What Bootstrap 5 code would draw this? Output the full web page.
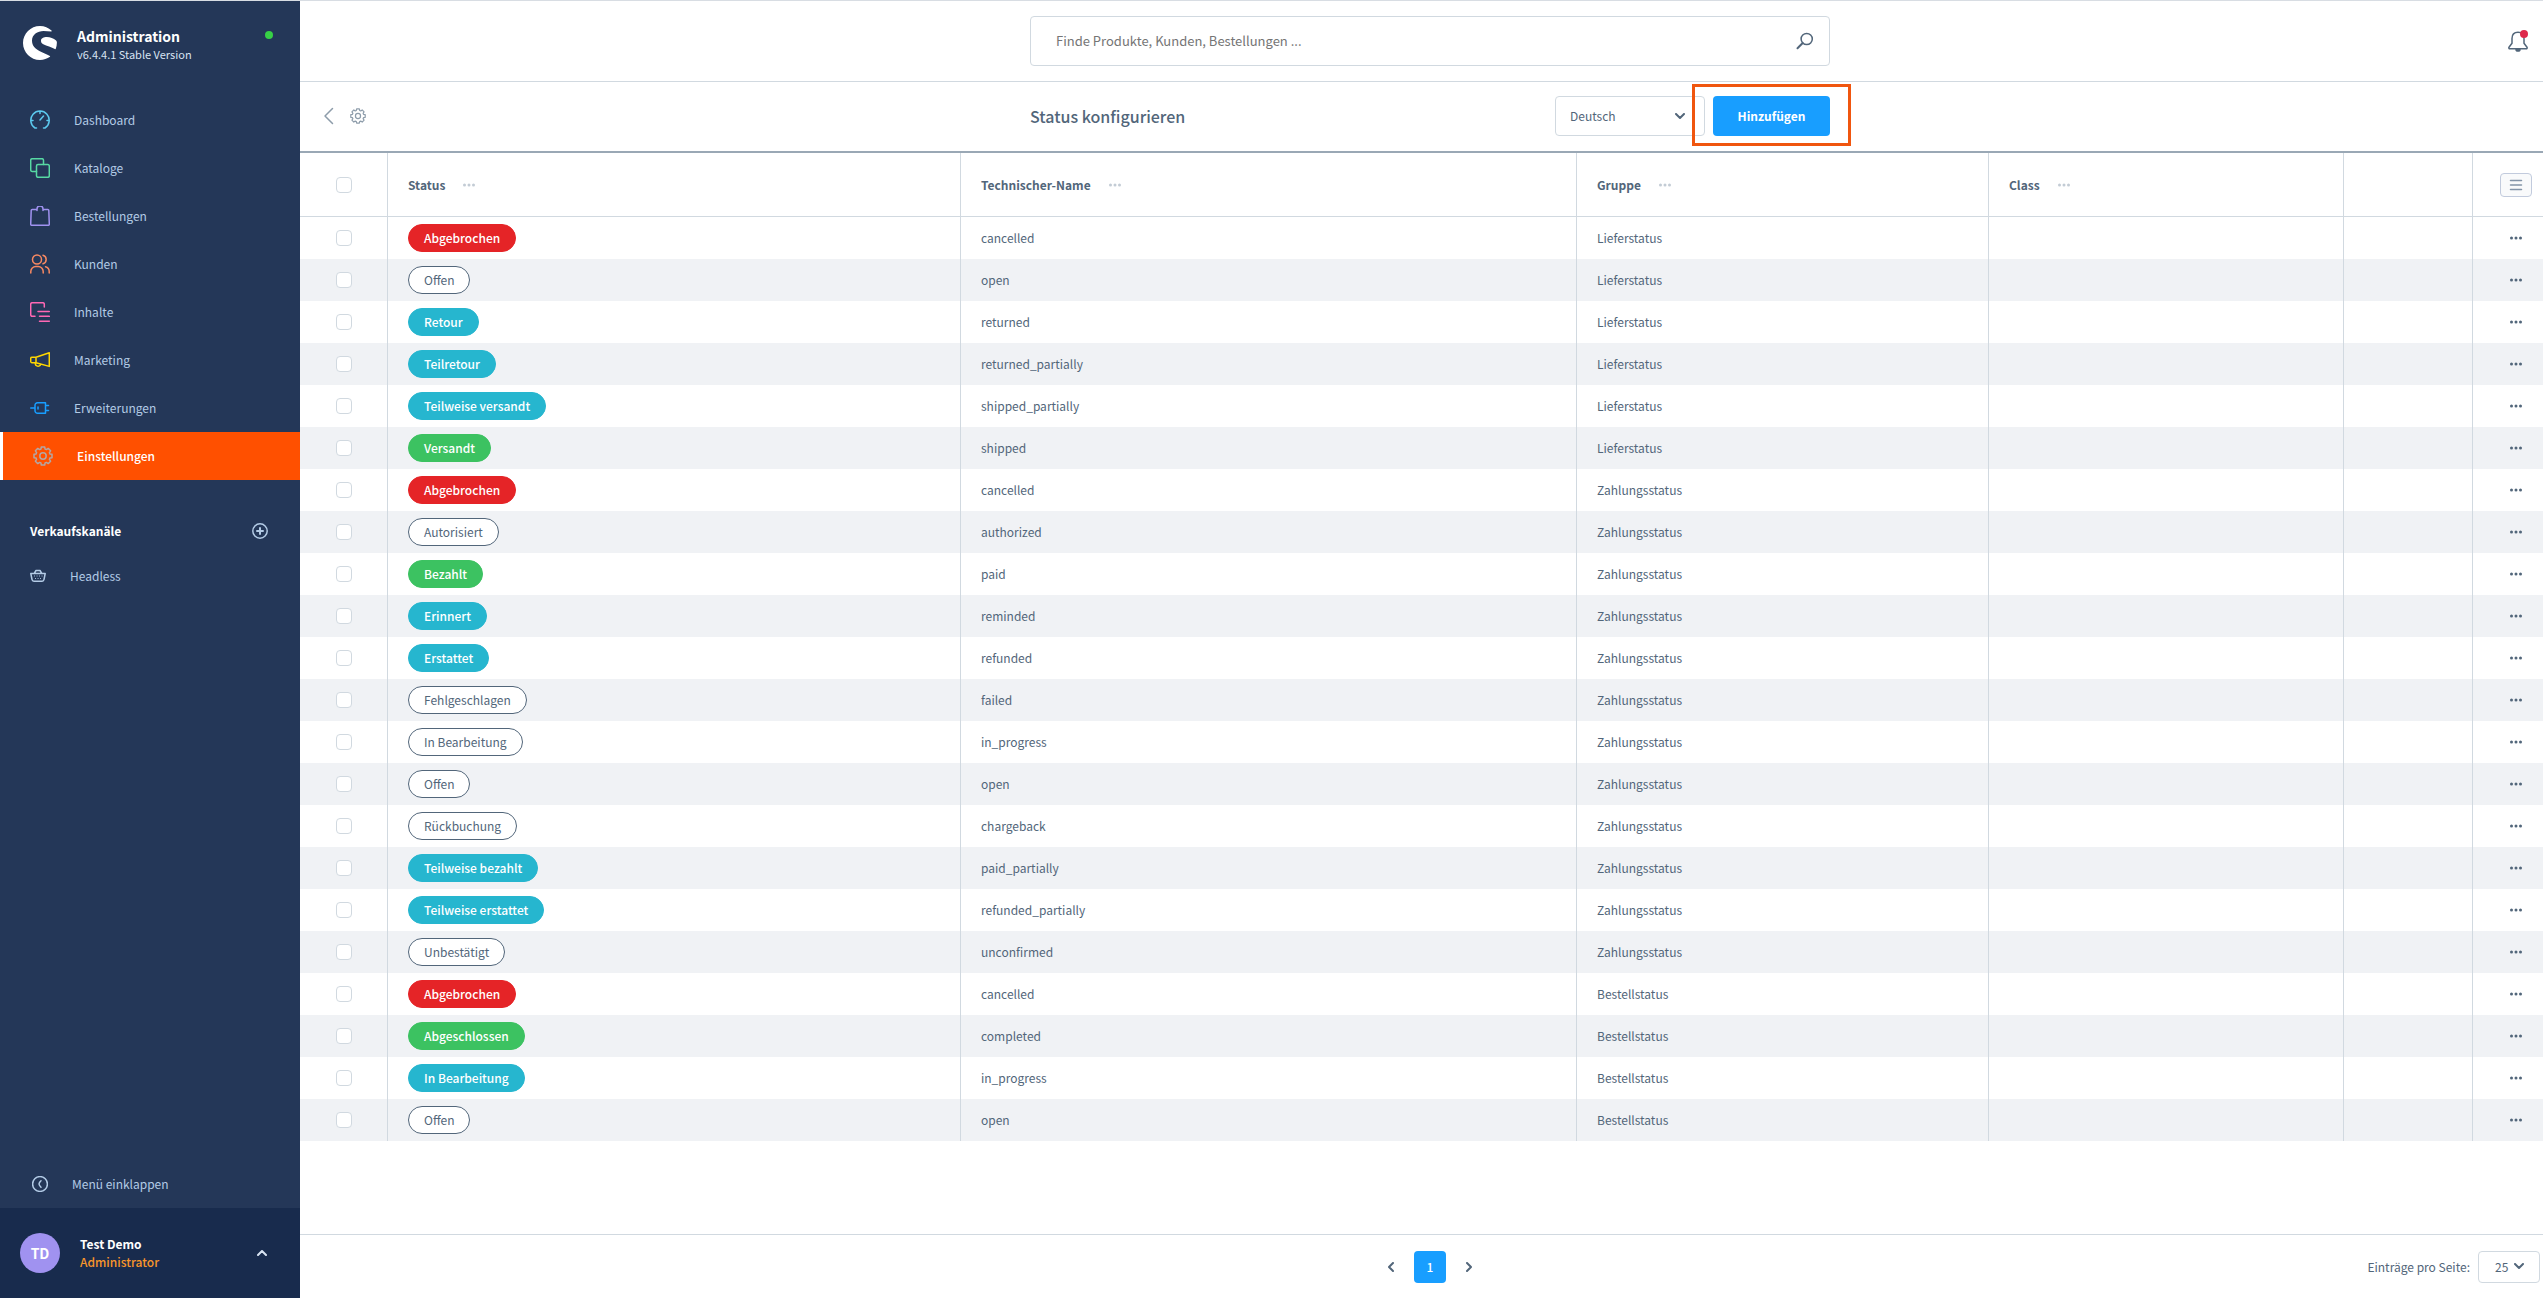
<!DOCTYPE html>
<html lang="de">
<head>
<meta charset="utf-8">
<meta name="viewport" content="width=device-width, initial-scale=1">
<title>Status konfigurieren | Administration</title>
<link href="https://cdn.jsdelivr.net/npm/bootstrap@5.3.0/dist/css/bootstrap.min.css" rel="stylesheet">
<style>
:root{--ink:#52667a;--line:#d1d9e0;--side:#243758;--side-text:#b3cbe6;--blue:#189eff}
body{font-family:"Noto Sans CJK SC","Noto Sans",sans-serif;font-size:12px;line-height:18px;color:var(--ink);background:#fff;min-height:100vh}
svg{display:block;fill:none;stroke:currentColor;stroke-width:1.5;stroke-linecap:round;stroke-linejoin:round;flex:none}
.app-frame{min-height:100vh;border-top:1px solid #d8dde3}
.side{width:300px;background:var(--side);color:var(--side-text)}
.side-head{height:95px;padding:21px 27px 0 23px;gap:20px;color:#fff}
.side-names{margin-top:5px}
.side-title{font-size:14px;font-weight:700}
.side-version{font-size:11px;line-height:18px;color:#d8e3f2}
.online-dot{width:8px;height:8px;border-radius:50%;background:#37d046;margin-top:9px}
.side-link{height:48px;padding:0 30px;gap:24px;color:var(--side-text);text-decoration:none}
.side-link.active{background:#ff5000;color:#fff;border-left:3px solid #fff;font-weight:500}
.side-link.active svg{color:#b3a7a5}
.side-section{margin-top:27px;height:48px;padding:0 32px 0 30px;color:#fff;font-weight:700}
.side-link.sub{height:42px;gap:24px}
.side-link.fold{padding-left:32px;gap:24px;width:100%;border:0;background:none}
.side-user{height:90px;background:#182b4d;padding:0 33px 0 20px;gap:20px;color:#fff;border:0;width:100%}
.user-role{color:#f8962b;font-weight:500}
.avatar{width:40px;height:40px;border-radius:50%;background:#a092f0;font-size:14px;font-weight:700}
.plain{border:0;background:none;padding:0;color:inherit}
.three{display:grid;grid-template-columns:minmax(0,1fr) minmax(0,800px) minmax(0,1fr);align-items:center;padding-left:17px}
.topbar{height:81px;border-bottom:1px solid var(--line)}
.search-box{border:1px solid var(--line);border-radius:4px;height:50px;padding:0 15px 0 25px}
.search-box input{border:0;outline:0;font-size:13px;color:var(--ink);background:none}
.search-box input::placeholder{color:#757575;opacity:1}
.bell{margin-right:15px;position:relative}
.bell i{position:absolute;top:0;right:0;width:8px;height:8px;border-radius:50%;background:#de294c}
.toolbar{height:71px;padding-bottom:1px;border-bottom:2px solid #9aa8b5}
.tools{padding-left:5px;gap:16px;color:#8d9caa}
.page-title{font-size:16px;font-weight:500;line-height:24px;margin:0}
.picker{appearance:none;border:1px solid var(--line);border-radius:4px;color:var(--ink);background:#fff url("data:image/svg+xml,%3Csvg xmlns='http://www.w3.org/2000/svg' width='10' height='7' fill='none' stroke='%2352667a' stroke-width='2' stroke-linecap='round' stroke-linejoin='round'%3E%3Cpath d='M1 1l4 4 4-4'/%3E%3C/svg%3E") no-repeat}
.picker.lang{width:150px;height:40px;padding:0 14px;background-position:right 19px center}
.picker.count{width:62px;height:32px;padding:0 16px;background-position:right 15px center;margin-right:3px}
.add-btn{height:40px;width:117px;border:0;border-radius:4px;background:var(--blue);color:#fff;font-weight:700}
.callout-frame{position:absolute;inset:-12px -21px -10px -21px;border:3px solid #f0560f;pointer-events:none}
.states{table-layout:fixed;width:100%;border-collapse:separate;border-spacing:0}
.states th,.states td{padding:0 0 0 20px;border-right:1px solid var(--line);vertical-align:middle;overflow:hidden;white-space:nowrap}
.states th:last-child,.states td:last-child{border-right:0;padding:0 11px 0 0}
.states th:last-child>*,.states td:last-child>*{margin-left:auto}
.states th:first-child,.states td:first-child{padding:0}
.states th{height:64px;border-bottom:1px solid var(--line);font-weight:700}
.states td{height:42px}
.states tbody tr:nth-child(even) td{background:#f0f2f5}
.states input{appearance:none;display:block;width:16px;height:16px;border:1px solid var(--line);border-radius:4px;background:#fff;margin:0 auto}
.states svg{stroke:none;fill:currentColor}
.states td:last-child{padding-right:21px}
.head-cell{gap:18px}
th .plain{color:#c3ccd5}
.list-btn{width:32px;height:24px;border:1px solid #c2cbdd;border-radius:4px;background:#f9fafb;color:#8394a8;padding:0}
.states .list-btn svg{stroke:currentColor}
.pill{display:inline-block;height:28px;line-height:26px;padding:0 15px;border:1px solid var(--ink);border-radius:14px;background:#fff;vertical-align:middle}
.pill.red,.pill.teal,.pill.green{color:#fff;font-weight:500}
.pill.red{background:#e52427;border-color:#e52427}
.pill.teal{background:#26b6cf;border-color:#26b6cf}
.pill.green{background:#3cc261;border-color:#3cc261}
.pager{height:64px;border-top:1px solid var(--line)}
.pager .current{width:32px;height:32px;border:0;border-radius:4px;background:var(--blue);color:#fff;font-weight:500}
</style>
<script src="https://cdn.jsdelivr.net/npm/bootstrap@5.3.0/dist/js/bootstrap.bundle.min.js"></script>
</head>
<body>
<svg class="d-none" aria-hidden="true">
 <symbol id="dots" viewBox="0 0 12 4"><circle cx="1.5" cy="2" r="1.5"/><circle cx="6" cy="2" r="1.5"/><circle cx="10.5" cy="2" r="1.5"/></symbol>
 <symbol id="gear" viewBox="0 0 20 20"><path d="M8.300 1h3.400l.4 2.100 1.300.5 1.800-1.200 2.400 2.400-1.200 1.800.5 1.300 2.100.4v3.400l-2.100.4-.5 1.300 1.200 1.800-2.400 2.400-1.800-1.200-1.300.5-.4 2.100H8.300l-.4-2.100-1.300-.5-1.800 1.200-2.400-2.400 1.200-1.800-.5-1.300L1 11.700V8.300l2.100-.4.5-1.300-1.200-1.800 2.400-2.400 1.800 1.200 1.300-.5z"/><circle cx="10" cy="10" r="3.200"/></symbol>
</svg>
<div class="app-frame d-flex">
 <aside class="side d-flex flex-column flex-shrink-0">
  <header class="side-head d-flex align-items-start">
   <svg class="mt-1" width="34" height="34" viewBox="0 0 34 34" style="stroke:none;fill:#fff"><path d="M28.500 4.500C25.500 1.800 21.500 0 17 0 7.600 0 0 7.600 0 17s7.600 17 17 17c3.700 0 7.200-1.200 10-3.200.3-.2.2-.6-.1-.8-3-1.700-7.300-3.300-10.500-5C12 22.600 9 19.800 9 14.500 9 8.500 14.500 4.900 20.500 4.900c2.700 0 5.300.2 7.800.5.500 0 .6-.5.200-.9z"/><path d="M33.900 16.600c0 2.300-.4 4.300-1.100 6.200-.2.500-.6.600-1 .3C28.600 21 23.700 20.200 20.300 18.300 18.500 17.300 18 16 18 14.700c0-2.400 2.700-3.700 5.800-3.700 3.400 0 6.800 1.300 9.300 3.400.6.500.8 1.200.8 2.200z"/></svg>
   <div class="side-names flex-grow-1"><div class="side-title">Administration</div><div class="side-version">v6.4.4.1 Stable Version</div></div>
   <span class="online-dot"></span>
  </header>
  <nav class="d-flex flex-column">
   <a class="side-link d-flex align-items-center" href="#"><svg style="color:#5cc9ee" width="20" height="20" viewBox="0 0 20 20"><path d="M6.500 18H5a9.200 9.200 0 1 1 10 0h-1.500M10 1v2.500M1 10.500h2M17 10.500h2M10 10l3.500-4"/></svg>Dashboard</a>
   <a class="side-link d-flex align-items-center" href="#"><svg style="color:#57d9a3" width="20" height="20" viewBox="0 0 20 20"><rect x="6.500" y="6.500" width="12.800" height="12.800" rx="1.500"/><path d="M6.500 13.500H2.200A1.500 1.500 0 0 1 .7 12V2.200A1.500 1.500 0 0 1 2.200.7H12a1.500 1.500 0 0 1 1.500 1.500v4.300"/></svg>Kataloge</a>
   <a class="side-link d-flex align-items-center" href="#"><svg style="color:#a092f0" width="20" height="20" viewBox="0 0 20 20"><path d="M4.500 3.500H2.200a1 1 0 0 0-1 .9L.7 18.200a1 1 0 0 0 1 1.100h16.600a1 1 0 0 0 1-1.100L18.800 4.400a1 1 0 0 0-1-.9h-2.300M7 4.500V3a3 3 0 0 1 6 0v1.500M4.500 3.500H7M13 3.500h2.500"/></svg>Bestellungen</a>
   <a class="side-link d-flex align-items-center" href="#"><svg style="color:#f88962" width="20" height="20" viewBox="0 0 20 20"><circle cx="7" cy="5.500" r="4.500"/><path d="M.8 19v-1.500a5 5 0 0 1 5-5h2.400a5 5 0 0 1 5 5V19M13 1.200a4.500 4.500 0 0 1 0 8.600M15.500 12.700a5 5 0 0 1 3.700 4.800V19"/></svg>Kunden</a>
   <a class="side-link d-flex align-items-center" href="#"><svg style="color:#ff68b4" width="20" height="20" viewBox="0 0 20 20"><path d="M5 14.300H2.200a1.500 1.500 0 0 1-1.500-1.500V2.200A1.500 1.500 0 0 1 2.200.7h10.600a1.500 1.500 0 0 1 1.500 1.500V5M8 9.500h11.300M9.500 14.300h9.800M9.500 19.200h9.800"/></svg>Inhalte</a>
   <a class="side-link d-flex align-items-center" href="#"><svg style="color:#ffd700" width="20" height="20" viewBox="0 0 20 20"><path d="M6 7.300 19.300 2.800v13.600L6 12.700zM6 7.300H2A1.300 1.300 0 0 0 .7 8.600v2.800A1.300 1.300 0 0 0 2 12.700h4M5.500 12.800a2.700 2.700 0 0 0 5.200 1.500"/></svg>Marketing</a>
   <a class="side-link d-flex align-items-center" href="#"><svg style="color:#189eff" width="20" height="20" viewBox="0 0 20 20"><path d="M.7 10H5M7.500 4.700h8v10.600h-8A2.500 2.500 0 0 1 5 12.800V7.200a2.500 2.500 0 0 1 2.500-2.500zM15.500 7.500H18.500M15.500 12.500H18.500M8 9v2"/></svg>Erweiterungen</a>
   <a class="side-link active d-flex align-items-center" href="#"><svg width="20" height="20"><use href="#gear"/></svg>Einstellungen</a>
  </nav>
  <div class="side-section d-flex align-items-center justify-content-between">Verkaufskanäle
   <button class="plain" aria-label="Verkaufskanal hinzufügen" style="color:#b3cbe6"><svg width="16" height="16" viewBox="0 0 16 16"><circle cx="8" cy="8" r="7.200"/><path d="M8 5v6M5 8h6" stroke-width="2"/></svg></button></div>
  <a class="side-link sub d-flex align-items-center" href="#"><svg width="16" height="16" viewBox="0 0 16 16" stroke-width="1.200"><path d="M.8 5.500h14.400L14 11.500a2 2 0 0 1-2 1.700H4a2 2 0 0 1-2-1.700zM4.500 5 6 2.500h4L11.500 5"/><path d="M4.500 8h.1M7 8h.1M9.500 8h.1M12 8h.1M5.500 10.500h.1M8 10.500h.1M10.500 10.500h.1" stroke-width="1"/></svg>Headless</a>
  <div class="mt-auto">
   <button class="side-link fold d-flex align-items-center"><svg width="16" height="16" viewBox="0 0 16 16" stroke-width="1.200"><circle cx="8" cy="8" r="7.400"/><path d="M9 4.800Q7.200 6.500 7 8q.2 1.500 2 3.200"/></svg>Menü einklappen</button>
   <button class="side-user d-flex align-items-center text-start">
    <span class="avatar d-flex align-items-center justify-content-center">TD</span>
    <span class="flex-grow-1"><strong>Test Demo</strong><br><span class="user-role">Administrator</span></span>
    <svg width="10" height="6" viewBox="0 0 10 6" style="color:#d8e3f2;stroke-width:2"><path d="M1 5l4-4 4 4"/></svg>
   </button>
  </div>
 </aside>
 <main class="flex-grow-1 d-flex flex-column" style="min-width:0">
  <div class="topbar three">
   <span></span>
   <label class="search-box d-flex align-items-center"><input class="flex-grow-1 p-0" type="search" placeholder="Finde Produkte, Kunden, Bestellungen ..." aria-label="Suche">
    <svg width="18" height="18" viewBox="0 0 18 18"><circle cx="10.700" cy="7" r="5.600"/><path d="M6.700 11 1.500 16.200" stroke-width="2"/></svg></label>
   <button class="plain bell ms-auto" aria-label="Benachrichtigungen"><svg width="20" height="22" viewBox="0 0 20 22"><path d="M10 2.200c-3.800 0-6 2.600-6 6.300v4.800L1 17.200c-.4.800 0 1.600.9 1.600h16.200c.9 0 1.300-.8.9-1.600l-3-3.900V8.500c0-3.700-2.200-6.300-6-6.300z"/><path d="M8 19.500a2 1.600 0 0 0 4 0z" fill="currentColor"/></svg><i></i></button>
  </div>
  <div class="toolbar three">
   <div class="tools d-flex align-items-center"><a href="#" class="text-reset" aria-label="Zurück"><svg width="12" height="18" viewBox="0 0 12 18"><path d="M10.500 1.500 3 9l7.500 7.500"/></svg></a><button class="plain" aria-label="Einstellungen"><svg width="16" height="16"><use href="#gear"/></svg></button></div>
   <div class="d-flex align-items-center justify-content-between">
    <h1 class="page-title">Status konfigurieren</h1>
    <div class="d-flex gap-2"><select class="picker lang" aria-label="Sprache"><option>Deutsch</option></select>
     <div class="position-relative"><button class="add-btn">Hinzufügen</button><span class="callout-frame"></span></div></div>
   </div>
   <span></span>
  </div>
  <table class="states">
   <colgroup><col style="width:88px"><col style="width:573px"><col style="width:616px"><col style="width:412px"><col style="width:355px"><col style="width:129px"><col style="width:70px"></colgroup>
   <thead><tr><th><input type="checkbox" aria-label="Alle auswählen"></th>
    <th><div class="head-cell d-flex align-items-center">Status <button class="plain" aria-label="Spalte Status"><svg width="12" height="4"><use href="#dots"/></svg></button></div></th>
    <th><div class="head-cell d-flex align-items-center">Technischer-Name <button class="plain" aria-label="Spalte Technischer-Name"><svg width="12" height="4"><use href="#dots"/></svg></button></div></th>
    <th><div class="head-cell d-flex align-items-center">Gruppe <button class="plain" aria-label="Spalte Gruppe"><svg width="12" height="4"><use href="#dots"/></svg></button></div></th>
    <th><div class="head-cell d-flex align-items-center">Class <button class="plain" aria-label="Spalte Class"><svg width="12" height="4"><use href="#dots"/></svg></button></div></th>
    <th></th><th><button class="list-btn d-flex align-items-center justify-content-center" aria-label="Spalten"><svg width="14" height="12" viewBox="0 0 14 12"><path d="M1.500 1.500h11M1.500 6h11M1.500 10.500h11"/></svg></button></th></tr></thead>
   <tbody id="rows"></tbody>
  </table>
  <div class="pager three mt-auto">
   <span></span>
   <div class="d-flex align-items-center justify-content-center" style="gap:20px">
    <button class="plain" aria-label="Zurück"><svg width="6" height="10" viewBox="0 0 6 10" style="stroke-width:2"><path d="M5 1 1 5l4 4"/></svg></button>
    <button class="current">1</button>
    <button class="plain" aria-label="Weiter"><svg width="6" height="10" viewBox="0 0 6 10" style="stroke-width:2"><path d="m1 1 4 4-4 4"/></svg></button>
   </div>
   <div class="d-flex align-items-center justify-content-end gap-2"><label for="per">Einträge pro Seite:</label><select id="per" class="picker count"><option>25</option></select></div>
  </div>
 </main>
</div>
<script>
const L='Lieferstatus',Z='Zahlungsstatus',B='Bestellstatus';
const states=[
 ['Abgebrochen','red','cancelled',L],['Offen','','open',L],['Retour','teal','returned',L],['Teilretour','teal','returned_partially',L],
 ['Teilweise versandt','teal','shipped_partially',L],['Versandt','green','shipped',L],
 ['Abgebrochen','red','cancelled',Z],['Autorisiert','','authorized',Z],['Bezahlt','green','paid',Z],['Erinnert','teal','reminded',Z],
 ['Erstattet','teal','refunded',Z],['Fehlgeschlagen','','failed',Z],['In Bearbeitung','','in_progress',Z],['Offen','','open',Z],
 ['Rückbuchung','','chargeback',Z],['Teilweise bezahlt','teal','paid_partially',Z],['Teilweise erstattet','teal','refunded_partially',Z],
 ['Unbestätigt','','unconfirmed',Z],
 ['Abgebrochen','red','cancelled',B],['Abgeschlossen','green','completed',B],['In Bearbeitung','teal','in_progress',B],['Offen','','open',B]];
document.getElementById('rows').innerHTML=states.map(([n,c,t,g])=>
 `<tr><td><input type="checkbox" aria-label="${n}"></td><td><span class="pill ${c}">${n}</span></td><td>${t}</td><td>${g}</td><td></td><td></td><td><button class="plain d-block" aria-label="Aktionen"><svg width="12" height="4"><use href="#dots"/></svg></button></td></tr>`).join('');
</script>
</body>
</html>
